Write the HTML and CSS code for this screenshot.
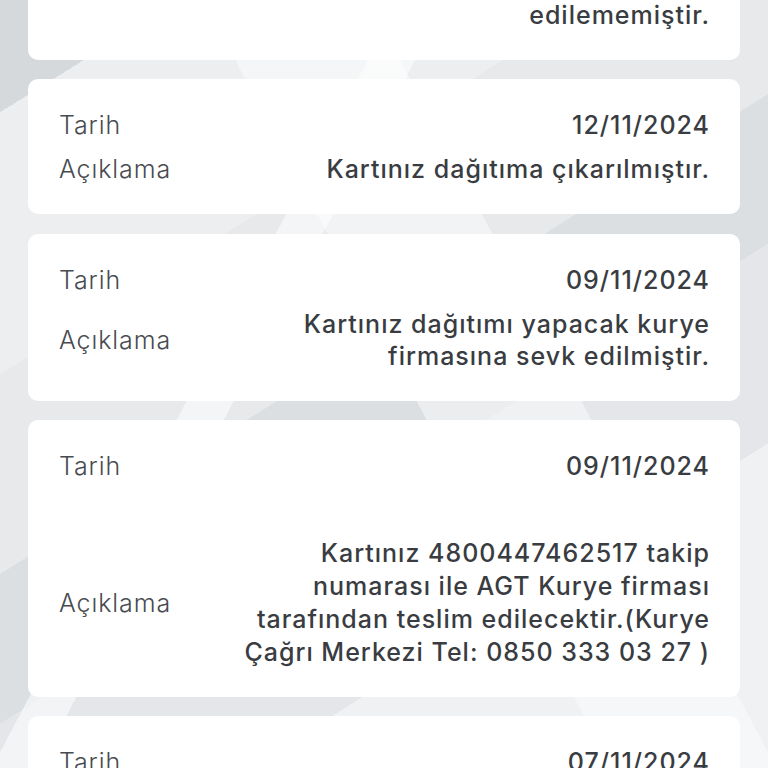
FILE: index.html
```html
<!DOCTYPE html>
<html lang="tr">
<head>
<meta charset="utf-8">
<title>Kart Takip</title>
<link rel="stylesheet" href="styles.css">
</head>
<body>
<main class="list">
  <section class="card card--first">
    <div class="row"><span class="label">Tarih</span><span class="value">13/11/2024</span></div>
    <div class="row"><span class="label">Açıklama</span><span class="value">Kartınız adreste alıcı<br>bulunamadığı için teslim<br>edilememiştir.</span></div>
  </section>
  <section class="card">
    <div class="row"><span class="label">Tarih</span><span class="value">12/11/2024</span></div>
    <div class="row"><span class="label">Açıklama</span><span class="value">Kartınız dağıtıma çıkarılmıştır.</span></div>
  </section>
  <section class="card">
    <div class="row"><span class="label">Tarih</span><span class="value">09/11/2024</span></div>
    <div class="row"><span class="label">Açıklama</span><span class="value">Kartınız dağıtımı yapacak kurye<br>firmasına sevk edilmiştir.</span></div>
  </section>
  <section class="card card--long">
    <div class="row"><span class="label">Tarih</span><span class="value">09/11/2024</span></div>
    <div class="row"><span class="label">Açıklama</span><span class="value">Kartınız 4800447462517 takip<br>numarası ile AGT Kurye firması<br>tarafından teslim edilecektir.(Kurye<br>Çağrı Merkezi Tel: 0850 333 03 27 )</span></div>
  </section>
  <section class="card">
    <div class="row"><span class="label">Tarih</span><span class="value">07/11/2024</span></div>
    <div class="row"><span class="label">Açıklama</span><span class="value">Kartınız basılmıştır.</span></div>
  </section>
</main>
</body>
</html>
```
FILE: styles.css
```css
html, body {
  margin: 0;
  padding: 0;
  height: 100%;
  overflow: hidden;
}
body {
  font-family: "Inter", "Open Sans", "DejaVu Sans", sans-serif;
  background-color: #e3e5e8;
  background-image:
    linear-gradient(118deg, transparent 0 34%, rgba(255,255,255,0.55) 34% 38%, transparent 38% 100%),
    linear-gradient(62deg, transparent 0 52%, rgba(255,255,255,0.45) 52% 66%, transparent 66% 100%),
    linear-gradient(148deg, #d6d9dc 0 9%, #eceef0 9% 30%, #e7e9eb 30% 46%, #dcdfe2 46% 58%, #e4e6e9 58% 74%, #eff1f3 74% 100%);
}
.list {
  display: flex;
  flex-direction: column;
  gap: 19.3px;
  margin: -139px 28px 0;
}
.card {
  background: #ffffff;
  border-radius: 10px;
  padding: 30px 30px 29px 31px;
  display: flex;
  flex-direction: column;
  gap: 12px;
}
.card--long {
  gap: 54px;
  padding-bottom: 28px;
}
.row {
  display: flex;
  justify-content: space-between;
  align-items: center;
  gap: 24px;
}
.label {
  font-size: 25px;
  font-weight: 300;
  letter-spacing: 0.9px;
  color: #484b50;
  line-height: 32px;
  white-space: nowrap;
}
.value {
  font-size: 25px;
  font-weight: 500;
  letter-spacing: 1px;
  color: #393c41;
  line-height: 32px;
  text-align: right;
  white-space: nowrap;
}
.card--long .value {
  line-height: 33px;
}
```
